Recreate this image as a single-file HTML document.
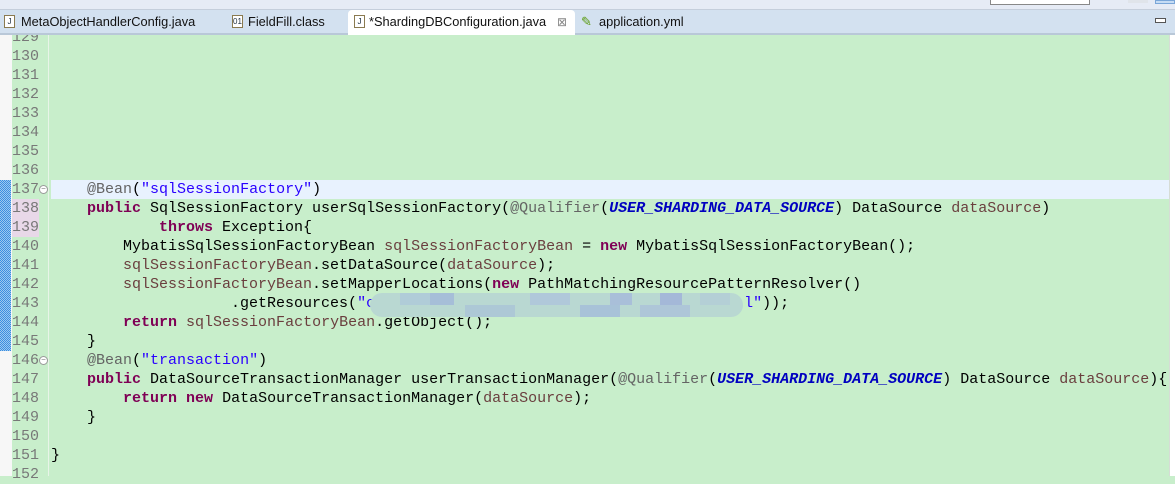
<!DOCTYPE html>
<html><head><meta charset="utf-8"><style>
*{margin:0;padding:0;box-sizing:border-box}
body{width:1175px;height:476px;overflow:hidden;background:#c8eecb;position:relative;font-family:"Liberation Mono",monospace}
#tool{position:absolute;left:0;top:0;width:1175px;height:10px;background:#e6ebf5;border-bottom:1px solid #c5cedb;z-index:5}
#tabs{position:absolute;left:0;top:10px;width:1175px;height:25px;background:#d3e1f0;border-bottom:2px solid #b9c8d8;font-family:"Liberation Sans",sans-serif;font-size:12.8px;color:#111;z-index:5}
.t{position:absolute;top:0;height:23px;line-height:24px;white-space:nowrap}
.ic{position:absolute;top:5px;width:11px;height:13px;border:1px solid #8a7a50;background:#fff;font-size:8px;line-height:11px;text-align:center;color:#234;font-family:"Liberation Sans",sans-serif}
#gut{position:absolute;left:0;top:34px;width:12px;height:442px;background:#f7f7f7}
#chg{position:absolute;left:0;top:180px;width:11px;height:171px;background-color:#3c8ee0;background-image:linear-gradient(45deg,#9cc8f0 25%,transparent 25%,transparent 75%,#9cc8f0 75%),linear-gradient(45deg,#9cc8f0 25%,transparent 25%,transparent 75%,#9cc8f0 75%);background-size:2px 2px;background-position:0 0,1px 1px}
#div{position:absolute;left:48px;top:34px;width:1px;height:442px;background:#e8f4e8}
#rr{position:absolute;right:0;top:34px;width:6px;height:442px;background:#fff;border-left:1px solid #d6dcd6}
#hl{position:absolute;left:51px;top:180px;width:1118px;height:19px;background:#e8f2fe}
.pk{position:absolute;left:12px;width:27px;height:19px;background:#e8d8e8}
.ln{position:absolute;left:12px;width:36px;font-size:15px;line-height:19px;color:#787878}
.c{position:absolute;left:51px;font-size:15px;line-height:19px;color:#000;white-space:pre}
.k{color:#7f0055;font-weight:bold}.s{color:#2a00ff}.v{color:#6a3e3e}.a{color:#646464}.q{color:#0000c0;font-weight:bold;font-style:italic}
.fold{position:absolute;left:39px;width:9px;height:9px;border:1px solid #999;border-radius:50%;font-size:8px;line-height:7px;text-align:center;color:#777;background:#fff}
#blur{position:absolute;left:370px;top:293px;width:373px;height:24px;border-radius:12px;background:#b9d8d2;overflow:hidden}
#blur i{position:absolute;height:12px;display:block}
</style></head><body>
<div id="tool"><div style="position:absolute;left:990px;top:0;width:100px;height:5px;background:#fff;border:1px solid #888;border-top:0"></div><div style="position:absolute;left:1128px;top:0;width:20px;height:3px;background:#e0e4ea"></div><div style="position:absolute;left:1155px;top:0;width:20px;height:4px;background:#c6dcf4;border:1px solid #7aa6d8"></div></div>
<div id="tabs">
<div class="ic" style="left:4px">J</div><div class="t" style="left:21px">MetaObjectHandlerConfig.java</div>
<div class="ic" style="left:232px">01</div><div class="t" style="left:248px">FieldFill.class</div>
<div style="position:absolute;left:348px;top:0;width:227px;height:25px;background:#fff;border-radius:4px 4px 0 0"></div>
<div class="ic" style="left:354px">J</div><div class="t" style="left:369px">*ShardingDBConfiguration.java</div>
<div class="t" style="left:557px;color:#888;font-size:12px">⊠</div>
<div class="t" style="left:581px;color:#5a9a10">✎</div><div class="t" style="left:599px">application.yml</div>
<div style="position:absolute;left:1155px;top:8px;width:11px;height:5px;border:1px solid #555;background:#fff"></div>
</div>
<div id="gut"></div><div id="chg"></div><div id="div"></div><div id="rr"></div>
<div id="hl"></div>
<div class="pk" style="top:199px"></div><div class="pk" style="top:218px"></div>
<div class="ln" style="top:28px">129</div>
<div class="ln" style="top:47px">130</div>
<div class="ln" style="top:66px">131</div>
<div class="ln" style="top:85px">132</div>
<div class="ln" style="top:104px">133</div>
<div class="ln" style="top:123px">134</div>
<div class="ln" style="top:142px">135</div>
<div class="ln" style="top:161px">136</div>
<div class="ln" style="top:180px">137</div>
<div class="ln" style="top:199px">138</div>
<div class="ln" style="top:218px">139</div>
<div class="ln" style="top:237px">140</div>
<div class="ln" style="top:256px">141</div>
<div class="ln" style="top:275px">142</div>
<div class="ln" style="top:294px">143</div>
<div class="ln" style="top:313px">144</div>
<div class="ln" style="top:332px">145</div>
<div class="ln" style="top:351px">146</div>
<div class="ln" style="top:370px">147</div>
<div class="ln" style="top:389px">148</div>
<div class="ln" style="top:408px">149</div>
<div class="ln" style="top:427px">150</div>
<div class="ln" style="top:446px">151</div>
<div class="ln" style="top:465px">152</div>
<div class="fold" style="top:185px">−</div><div class="fold" style="top:356px">−</div>
<div class="c" style="top:180px">    <span class="a">@Bean</span>(<span class="s">"sqlSessionFactory"</span>)</div>
<div class="c" style="top:199px">    <span class="k">public</span> SqlSessionFactory userSqlSessionFactory(<span class="a">@Qualifier</span>(<span class="q">USER_SHARDING_DATA_SOURCE</span>) DataSource <span class="v">dataSource</span>)</div>
<div class="c" style="top:218px">            <span class="k">throws</span> Exception{</div>
<div class="c" style="top:237px">        MybatisSqlSessionFactoryBean <span class="v">sqlSessionFactoryBean</span> = <span class="k">new</span> MybatisSqlSessionFactoryBean();</div>
<div class="c" style="top:256px">        <span class="v">sqlSessionFactoryBean</span>.setDataSource(<span class="v">dataSource</span>);</div>
<div class="c" style="top:275px">        <span class="v">sqlSessionFactoryBean</span>.setMapperLocations(<span class="k">new</span> PathMatchingResourcePatternResolver()</div>
<div class="c" style="top:294px">                    .getResources(<span class="s">"c<span style="color:transparent">xxxxxxxxxxxxxxxxxxxxxxxxxxxxxxxxxxxxxxxxx</span>l"</span>));</div>
<div class="c" style="top:313px">        <span class="k">return</span> <span class="v">sqlSessionFactoryBean</span>.getObject();</div>
<div class="c" style="top:332px">    }</div>
<div class="c" style="top:351px">    <span class="a">@Bean</span>(<span class="s">"transaction"</span>)</div>
<div class="c" style="top:370px">    <span class="k">public</span> DataSourceTransactionManager userTransactionManager(<span class="a">@Qualifier</span>(<span class="q">USER_SHARDING_DATA_SOURCE</span>) DataSource <span class="v">dataSource</span>){</div>
<div class="c" style="top:389px">        <span class="k">return</span> <span class="k">new</span> DataSourceTransactionManager(<span class="v">dataSource</span>);</div>
<div class="c" style="top:408px">    }</div>
<div class="c" style="top:446px">}</div>
<div id="blur">
<i style="left:30px;top:0;width:40px;background:#b0ccd8"></i>
<i style="left:60px;top:0;width:24px;background:#a6bed8"></i>
<i style="left:95px;top:12px;width:50px;background:#adc8d6"></i>
<i style="left:160px;top:0;width:40px;background:#b0c8da"></i>
<i style="left:210px;top:12px;width:40px;background:#a8c2d8"></i>
<i style="left:240px;top:0;width:22px;background:#a9bfd9"></i>
<i style="left:270px;top:12px;width:50px;background:#aec6d8"></i>
<i style="left:290px;top:0;width:22px;background:#a4b8d8"></i>
<i style="left:330px;top:0;width:30px;background:#b4cfd6"></i>
</div>
</body></html>
